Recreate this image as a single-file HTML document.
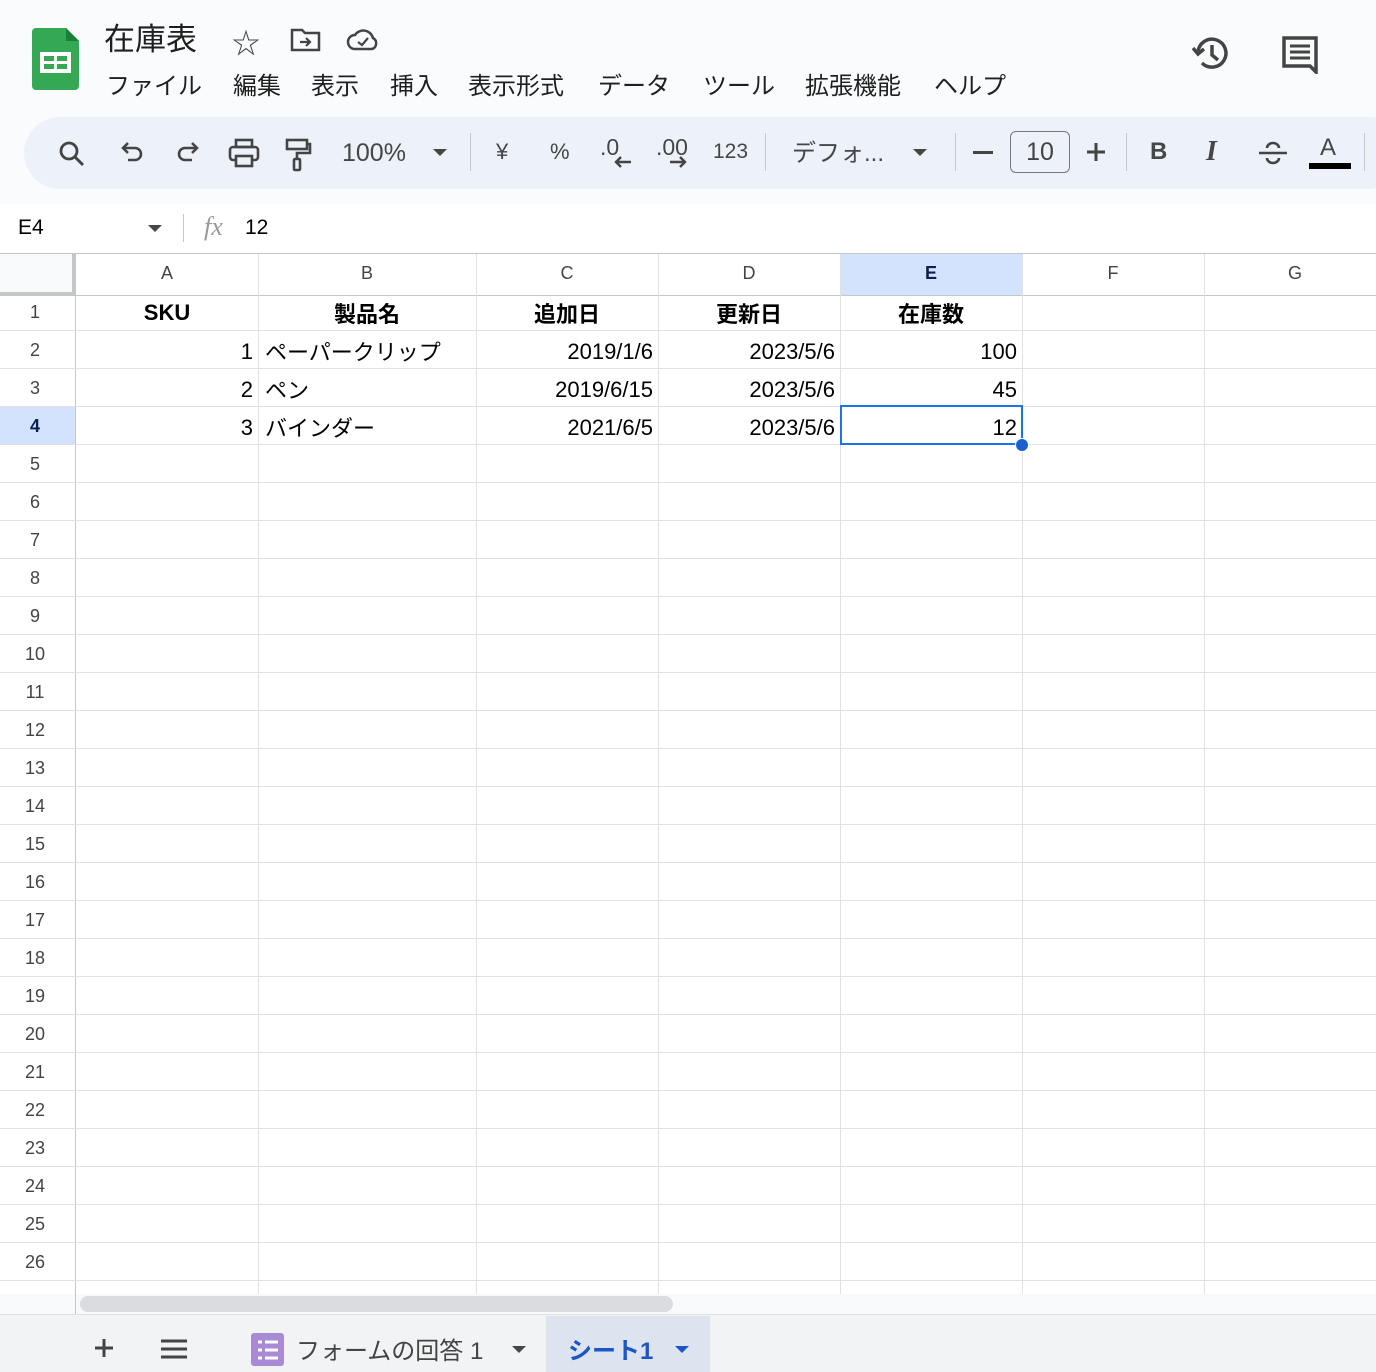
<!DOCTYPE html>
<html><head><meta charset="utf-8"><style>
*{margin:0;padding:0;box-sizing:border-box}
body{width:1376px;height:1372px;position:relative;overflow:hidden;background:#fff;font-family:"Liberation Sans","Noto Sans CJK JP",sans-serif;color:#1f1f1f}
.a{position:absolute}
.top{left:0;top:0;width:1376px;height:204px;background:#f9fbfd}
.m{position:absolute;top:66px;font-size:24px;color:#1f1f1f;white-space:nowrap}
.tb{left:24px;top:117px;width:1380px;height:72px;background:#edf2fa;border-radius:36px}
.ic{position:absolute;color:#444746;font-size:24px}
.tri{position:absolute;width:0;height:0;border-left:7px solid transparent;border-right:7px solid transparent;border-top:7px solid #444746}
.sep{position:absolute;top:133px;width:1px;height:38px;background:#c7c7c7}
.vl{position:absolute;top:254px;width:1px;height:1040px;background:#e1e1e1}
.hl{position:absolute;left:0;width:1376px;height:1px;background:#e1e1e1}
.rn{position:absolute;left:0;width:70px;text-align:center;font-size:18px;color:#444}
.cl{position:absolute;top:263px;text-align:center;font-size:18px;color:#444}
.c{position:absolute;font-size:22px;color:#000}
.j{margin-top:-4px}
</style></head><body>
<div class="a top"></div>
<svg class="a" style="left:32px;top:28px" width="47" height="62" viewBox="0 0 47 62"><path d="M4 0h30l13 13v45a4 4 0 0 1-4 4H4a4 4 0 0 1-4-4V4a4 4 0 0 1 4-4z" fill="#34a853"/><path d="M34 0v13h13z" fill="#188038"/><rect x="8" y="24" width="31" height="21" fill="#fff"/><rect x="12" y="28" width="10" height="5" fill="#34a853"/><rect x="25" y="28" width="10" height="5" fill="#34a853"/><rect x="12" y="36" width="10" height="5" fill="#34a853"/><rect x="25" y="36" width="10" height="5" fill="#34a853"/></svg>
<div class="a" style="left:104px;top:14px;font-size:31px">在庫表</div>
<div class="a" style="left:232px;top:22px;font-size:28px;color:#444">☆</div>
<svg class="a" style="left:290px;top:28px" width="32" height="24" viewBox="0 0 32 24"><path d="M2 2h10l3 3h14v17H2z" fill="none" stroke="#444" stroke-width="2.5"/><path d="M10 14h10M16 10l4 4-4 4" fill="none" stroke="#444" stroke-width="2.2"/></svg>
<svg class="a" style="left:346px;top:28px" width="34" height="24" viewBox="0 0 34 24"><path d="M9 21a7 7 0 0 1 0-14 10 10 0 0 1 18 3 6 6 0 0 1-1 11z" fill="none" stroke="#444" stroke-width="2.5"/><path d="M12 14l4 3 6-7" fill="none" stroke="#444" stroke-width="2.2"/></svg>
<div class="m" style="left:106px">ファイル</div><div class="m" style="left:233px">編集</div><div class="m" style="left:311px">表示</div><div class="m" style="left:390px">挿入</div><div class="m" style="left:468px">表示形式</div><div class="m" style="left:598px">データ</div><div class="m" style="left:703px">ツール</div><div class="m" style="left:805px">拡張機能</div><div class="m" style="left:934px">ヘルプ</div>
<svg class="a" style="left:1192px;top:34px" width="40" height="40" viewBox="0 0 40 40"><path d="M6 18A14 14 0 1 1 10 29" fill="none" stroke="#444" stroke-width="3.5"/><path d="M1 14l5 6 6-5" fill="none" stroke="#444" stroke-width="3.5"/><path d="M20 11v10l6 5" fill="none" stroke="#444" stroke-width="3.5"/></svg>
<svg class="a" style="left:1282px;top:36px" width="38" height="38" viewBox="0 0 38 38"><path d="M2 2h32v34l-6-6H2z" fill="none" stroke="#444" stroke-width="3.5"/><path d="M8 10h20M8 16h20M8 22h20" stroke="#444" stroke-width="3"/></svg>
<div class="a tb"></div>
<svg class="a" style="left:58px;top:140px" width="28" height="28" viewBox="0 0 28 28"><circle cx="11" cy="11" r="8" fill="none" stroke="#444" stroke-width="2.8"/><path d="M17 17l8 8" stroke="#444" stroke-width="3"/></svg>
<svg class="a" style="left:120px;top:142px" width="24" height="24" viewBox="0 0 24 24"><path d="M4 6h11a6 6 0 0 1 0 12H8" fill="none" stroke="#444" stroke-width="2.6"/><path d="M8 1L3 6l5 5" fill="none" stroke="#444" stroke-width="2.6"/></svg>
<svg class="a" style="left:176px;top:142px" width="24" height="24" viewBox="0 0 24 24"><path d="M20 6H9a6 6 0 0 0 0 12h7" fill="none" stroke="#444" stroke-width="2.6"/><path d="M16 1l5 5-5 5" fill="none" stroke="#444" stroke-width="2.6"/></svg>
<svg class="a" style="left:228px;top:138px" width="32" height="30" viewBox="0 0 32 30"><rect x="8" y="2" width="16" height="7" fill="none" stroke="#444" stroke-width="2.6"/><rect x="2" y="9" width="28" height="13" rx="3" fill="none" stroke="#444" stroke-width="2.6"/><rect x="8" y="18" width="16" height="10" fill="#edf2fa" stroke="#444" stroke-width="2.6"/></svg>
<svg class="a" style="left:284px;top:138px" width="28" height="34" viewBox="0 0 28 34"><rect x="3" y="2" width="20" height="9" fill="none" stroke="#444" stroke-width="2.6"/><path d="M23 6h3v9H13v6" fill="none" stroke="#444" stroke-width="2.6"/><rect x="10" y="21" width="6" height="11" rx="1" fill="none" stroke="#444" stroke-width="2.6"/></svg>
<div class="ic" style="left:342px;top:139px;font-size:25px">100%</div>
<div class="tri" style="left:433px;top:149px"></div>
<div class="sep" style="left:470px"></div>
<div class="ic" style="left:496px;top:139px;font-size:22px">¥</div>
<div class="ic" style="left:550px;top:139px;font-size:22px">%</div>
<div class="ic" style="left:600px;top:134px;font-size:23px">.0</div>
<svg class="a" style="left:613px;top:156px" width="20" height="12" viewBox="0 0 20 12"><path d="M18 6H3M8 1L3 6l5 5" fill="none" stroke="#444" stroke-width="2.4"/></svg>
<div class="ic" style="left:656px;top:134px;font-size:23px">.00</div>
<svg class="a" style="left:668px;top:156px" width="20" height="12" viewBox="0 0 20 12"><path d="M2 6h15M12 1l5 5-5 5" fill="none" stroke="#444" stroke-width="2.4"/></svg>
<div class="ic" style="left:713px;top:140px;font-size:21px">123</div>
<div class="sep" style="left:765px"></div>
<div class="ic" style="left:792px;top:133px">デフォ...</div>
<div class="tri" style="left:913px;top:149px"></div>
<div class="sep" style="left:955px"></div>
<div class="a" style="left:973px;top:151px;width:20px;height:3px;background:#444"></div>
<div class="a" style="left:1010px;top:131px;width:60px;height:42px;border:1.5px solid #747775;border-radius:6px;text-align:center;font-size:25px;line-height:40px;color:#444">10</div>
<svg class="a" style="left:1086px;top:142px" width="20" height="20" viewBox="0 0 20 20"><path d="M10 1v18M1 10h18" stroke="#444" stroke-width="3"/></svg>
<div class="sep" style="left:1126px"></div>
<div class="ic" style="left:1150px;top:138px;font-weight:bold">B</div>
<div class="ic" style="left:1206px;top:136px;font-size:28px;font-style:italic;font-family:'Liberation Serif',serif;font-weight:bold">I</div>
<svg class="a" style="left:1258px;top:139px" width="30" height="28" viewBox="0 0 30 28"><path d="M1 14h28" stroke="#444" stroke-width="2.6"/><path d="M9 9a6 5 0 0 1 12 0M9 19a6 5 0 0 0 12 0" fill="none" stroke="#444" stroke-width="2.6"/></svg>
<div class="ic" style="left:1320px;top:134px">A</div>
<div class="a" style="left:1309px;top:163px;width:42px;height:6px;background:#000"></div>
<div class="sep" style="left:1364px"></div>
<div class="a" style="left:0;top:204px;width:1376px;height:50px;background:#fff;border-bottom:1px solid #c4c7c5"></div>
<div class="a" style="left:18px;top:216px;font-size:21px;color:#000">E4</div>
<div class="tri" style="left:148px;top:225px"></div>
<div class="a" style="left:183px;top:214px;width:1px;height:28px;background:#c7c7c7"></div>
<div class="a" style="left:204px;top:212px;font-size:26px;color:#999;font-style:italic;font-family:'Liberation Serif',serif">fx</div>
<div class="a" style="left:245px;top:216px;font-size:21px;color:#000">12</div>
<div class="a" style="left:0;top:254px;width:76px;height:42px;background:#f8f9fa;border-right:4px solid #c4c7c5;border-bottom:4px solid #c4c7c5"></div>
<div class="a" style="left:840px;top:254px;width:182px;height:41px;background:#d3e3fd"></div>
<div class="a" style="left:0;top:406px;width:75px;height:38px;background:#d3e3fd"></div>
<div class="a" style="left:76px;top:295px;width:1300px;height:1px;background:#c4c7c5"></div>
<div class="a" style="left:75px;top:254px;width:1px;height:1040px;background:#c4c7c5"></div>
<div class="vl" style="left:258px"></div><div class="vl" style="left:476px"></div><div class="vl" style="left:658px"></div><div class="vl" style="left:840px"></div><div class="vl" style="left:1022px"></div><div class="vl" style="left:1204px"></div>
<div class="cl" style="left:76px;width:182px">A</div><div class="cl" style="left:258px;width:218px">B</div><div class="cl" style="left:476px;width:182px">C</div><div class="cl" style="left:658px;width:182px">D</div><div class="cl" style="left:840px;width:182px;color:#0b1f4d;font-weight:bold">E</div><div class="cl" style="left:1022px;width:182px">F</div><div class="cl" style="left:1204px;width:182px">G</div>
<div class="hl" style="top:330px"></div><div class="hl" style="top:368px"></div><div class="hl" style="top:406px"></div><div class="hl" style="top:444px"></div><div class="hl" style="top:482px"></div><div class="hl" style="top:520px"></div><div class="hl" style="top:558px"></div><div class="hl" style="top:596px"></div><div class="hl" style="top:634px"></div><div class="hl" style="top:672px"></div><div class="hl" style="top:710px"></div><div class="hl" style="top:748px"></div><div class="hl" style="top:786px"></div><div class="hl" style="top:824px"></div><div class="hl" style="top:862px"></div><div class="hl" style="top:900px"></div><div class="hl" style="top:938px"></div><div class="hl" style="top:976px"></div><div class="hl" style="top:1014px"></div><div class="hl" style="top:1052px"></div><div class="hl" style="top:1090px"></div><div class="hl" style="top:1128px"></div><div class="hl" style="top:1166px"></div><div class="hl" style="top:1204px"></div><div class="hl" style="top:1242px"></div><div class="hl" style="top:1280px"></div>
<div class="rn" style="top:302px">1</div><div class="rn" style="top:340px">2</div><div class="rn" style="top:378px">3</div><div class="rn" style="top:416px;font-weight:bold;color:#0b1f4d">4</div><div class="rn" style="top:454px">5</div><div class="rn" style="top:492px">6</div><div class="rn" style="top:530px">7</div><div class="rn" style="top:568px">8</div><div class="rn" style="top:606px">9</div><div class="rn" style="top:644px">10</div><div class="rn" style="top:682px">11</div><div class="rn" style="top:720px">12</div><div class="rn" style="top:758px">13</div><div class="rn" style="top:796px">14</div><div class="rn" style="top:834px">15</div><div class="rn" style="top:872px">16</div><div class="rn" style="top:910px">17</div><div class="rn" style="top:948px">18</div><div class="rn" style="top:986px">19</div><div class="rn" style="top:1024px">20</div><div class="rn" style="top:1062px">21</div><div class="rn" style="top:1100px">22</div><div class="rn" style="top:1138px">23</div><div class="rn" style="top:1176px">24</div><div class="rn" style="top:1214px">25</div><div class="rn" style="top:1252px">26</div>
<div class="c" style="left:76px;width:182px;top:300px;text-align:center;font-weight:bold">SKU</div>
<div class="c" style="left:258px;width:218px;top:297px;text-align:center;font-weight:bold">製品名</div>
<div class="c" style="left:476px;width:182px;top:297px;text-align:center;font-weight:bold">追加日</div>
<div class="c" style="left:658px;width:182px;top:297px;text-align:center;font-weight:bold">更新日</div>
<div class="c" style="left:840px;width:182px;top:297px;text-align:center;font-weight:bold">在庫数</div>
<div class="c" style="left:76px;width:177px;top:339px;text-align:right">1</div><div class="c" style="left:265px;top:335px">ペーパークリップ</div><div class="c" style="left:476px;width:177px;top:339px;text-align:right">2019/1/6</div><div class="c" style="left:658px;width:177px;top:339px;text-align:right">2023/5/6</div><div class="c" style="left:840px;width:177px;top:339px;text-align:right">100</div>
<div class="c" style="left:76px;width:177px;top:377px;text-align:right">2</div><div class="c" style="left:265px;top:373px">ペン</div><div class="c" style="left:476px;width:177px;top:377px;text-align:right">2019/6/15</div><div class="c" style="left:658px;width:177px;top:377px;text-align:right">2023/5/6</div><div class="c" style="left:840px;width:177px;top:377px;text-align:right">45</div>
<div class="c" style="left:76px;width:177px;top:415px;text-align:right">3</div><div class="c" style="left:265px;top:411px">バインダー</div><div class="c" style="left:476px;width:177px;top:415px;text-align:right">2021/6/5</div><div class="c" style="left:658px;width:177px;top:415px;text-align:right">2023/5/6</div><div class="c" style="left:840px;width:177px;top:415px;text-align:right">12</div>
<div class="a" style="left:840px;top:405px;width:183px;height:40px;border:2px solid #1a73e8"></div>
<div class="a" style="left:1015px;top:438px;width:14px;height:14px;border-radius:50%;background:#1a5fd0;border:1.5px solid #fff"></div>
<div class="a" style="left:0;top:1294px;width:1376px;height:20px;background:#f8f9fa"></div>
<div class="a" style="left:75px;top:1294px;width:1px;height:20px;background:#c4c7c5"></div>
<div class="a" style="left:80px;top:1296px;width:593px;height:16px;background:#dadce0;border-radius:8px"></div>
<div class="a" style="left:0;top:1314px;width:1376px;height:58px;background:#f1f3f4;border-top:1px solid #e1e1e1"></div>
<svg class="a" style="left:94px;top:1338px" width="20" height="20" viewBox="0 0 20 20"><path d="M10 1v18M1 10h18" stroke="#444" stroke-width="3"/></svg>
<svg class="a" style="left:160px;top:1339px" width="28" height="20" viewBox="0 0 28 20"><path d="M1 2h26M1 10h26M1 18h26" stroke="#444" stroke-width="3"/></svg>
<svg class="a" style="left:251px;top:1333px" width="33" height="33" viewBox="0 0 33 33"><rect width="33" height="33" rx="3" fill="#a98ad4"/><path d="M7 9h4M14 9h13M7 17h4M14 17h13M7 25h4M14 25h13" stroke="#fff" stroke-width="3"/></svg>
<div class="a" style="left:296px;top:1331px;font-size:24px;color:#444">フォームの回答 1</div>
<div class="tri" style="left:512px;top:1346px"></div>
<div class="a" style="left:546px;top:1316px;width:164px;height:56px;background:#dde3ef"></div>
<div class="a" style="left:568px;top:1331px;font-size:24px;color:#1a56c4;font-weight:bold">シート1</div>
<div class="tri" style="left:675px;top:1346px;border-top-color:#1a56c4"></div>
</body></html>
